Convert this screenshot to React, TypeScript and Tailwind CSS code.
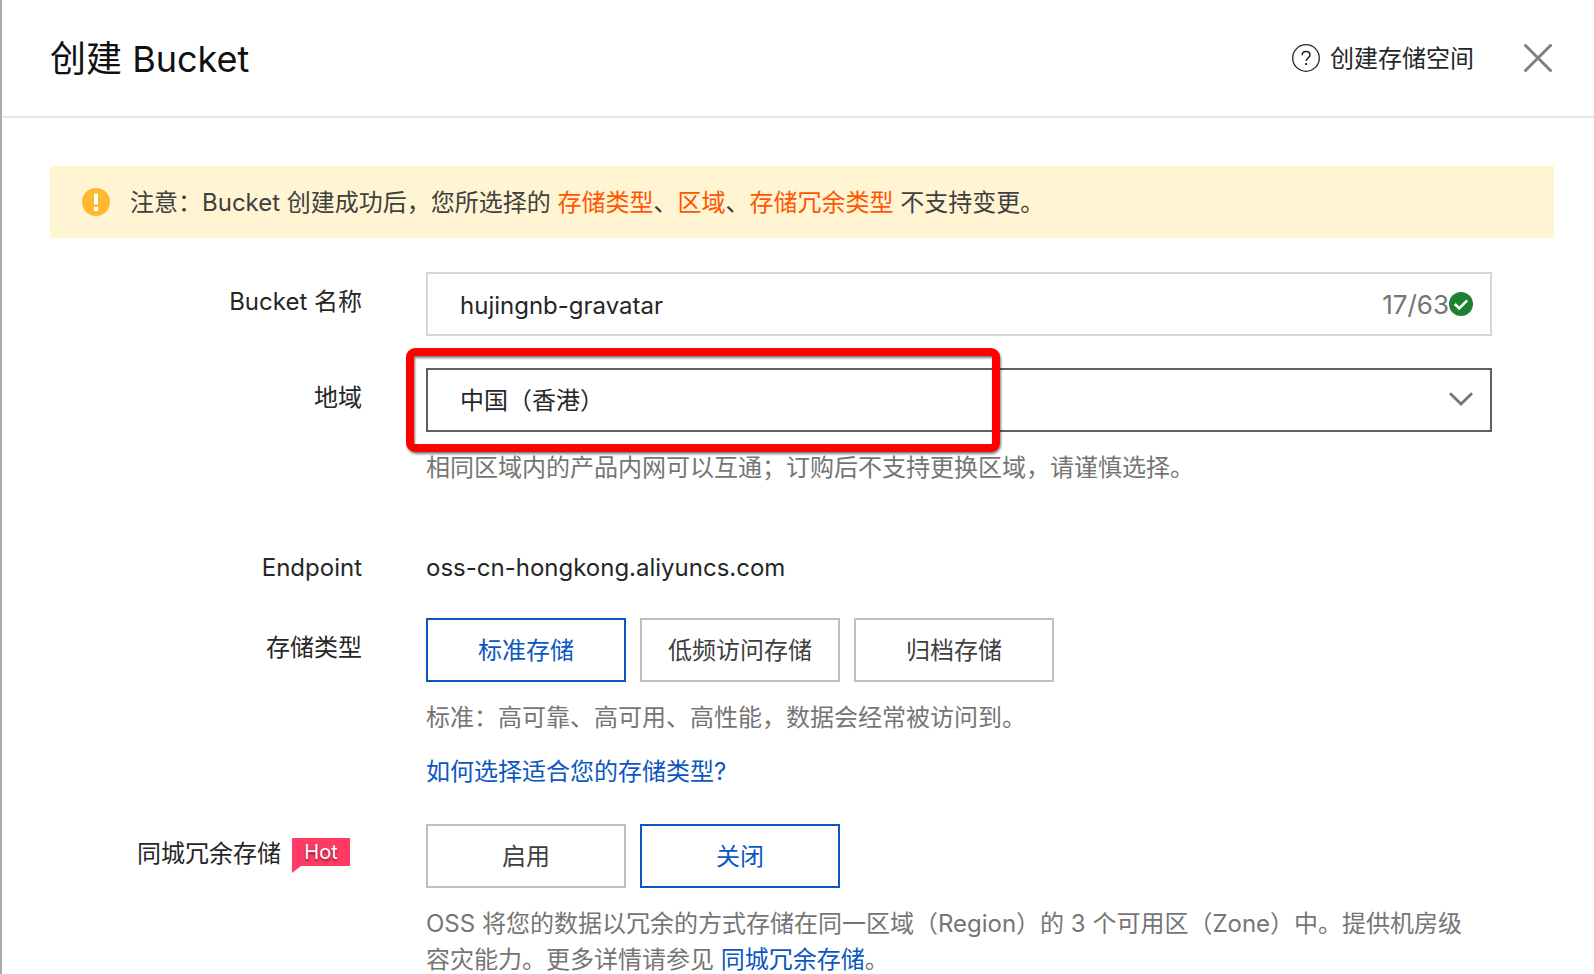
import { useState } from "react";
import type { ReactNode } from "react";

const STORAGE_TYPES = ["标准存储", "低频访问存储", "归档存储"];
const ZRS_OPTIONS = ["启用", "关闭"];

function OptionGroup({
  options,
  value,
  onChange,
}: {
  options: string[];
  value: string;
  onChange: (v: string) => void;
}) {
  return (
    <div className="flex gap-[14px]">
      {options.map((o) => (
        <button
          key={o}
          type="button"
          aria-pressed={o === value}
          onClick={() => onChange(o)}
          className={
            o === value
              ? "h-16 w-[200px] border-2 border-[#0b57c2] bg-white pt-0.5 text-[#0b57c2]"
              : "h-16 w-[200px] border-2 border-[#bfbfbf] bg-white pt-0.5 text-[#404040]"
          }
        >
          {o}
        </button>
      ))}
    </div>
  );
}

function Row({
  label,
  htmlFor,
  flat,
  children,
}: {
  label: ReactNode;
  htmlFor?: string;
  flat?: boolean;
  children: ReactNode;
}) {
  return (
    <div className="flex gap-16">
      <div className={flat ? "flex w-[312px] shrink-0 justify-end" : "flex w-[312px] shrink-0 justify-end pt-3"}>
        {htmlFor ? <label htmlFor={htmlFor}>{label}</label> : label}
      </div>
      <div className="relative min-w-0 flex-1">{children}</div>
    </div>
  );
}

function HotBadge() {
  return (
    <span className="relative mt-0.5 mr-3 ml-[11px] flex h-7 w-[58px] items-center justify-center bg-[#ff3b65] text-[20px] leading-7 text-white [text-shadow:0_2px_3px_rgba(0,0,0,0.5)]">
      Hot
      <svg className="absolute top-full left-0" width="10" height="7" viewBox="0 0 10 7" aria-hidden="true">
        <path d="M0 0h9L0 7z" fill="#ff3b65" />
      </svg>
    </span>
  );
}

export default function App() {
  const [name, setName] = useState("hujingnb-gravatar");
  const [region, setRegion] = useState("hongkong");
  const [storage, setStorage] = useState("标准存储");
  const [zrs, setZrs] = useState("关闭");

  return (
    <div className="h-screen overflow-hidden border-l-2 border-[#a9abae] bg-white font-['Inter','Noto_Sans_CJK_SC',sans-serif] text-[24px] leading-9 text-[#262626]">
      <header className="flex h-[118px] items-center justify-between border-b-2 border-[#e5e5e5] pr-[42px] pl-12">
        <h1 className="pt-0.5 text-[36px] leading-[48px] text-[#111]">创建 Bucket</h1>
        <div className="flex items-center gap-[50px]">
          <a href="#help" className="flex items-center gap-[10px]">
            <svg width="28" height="28" viewBox="0 0 28 28" fill="none" stroke="#262626" aria-hidden="true">
              <circle cx="14" cy="14" r="13.3" strokeWidth="1.3" />
              <path d="M10.2 11.2c0-2.3 1.6-3.7 3.9-3.7s3.9 1.4 3.9 3.4c0 2.9-3.8 3-3.8 6.2" strokeWidth="1.5" />
              <path d="M14.1 18.9v2" strokeWidth="1.8" />
            </svg>
            <span className="pt-0.5">创建存储空间</span>
          </a>
          <button type="button" aria-label="关闭窗口">
            <svg width="28" height="28" viewBox="0 0 28 28" stroke="#808080" strokeWidth="3" strokeLinecap="round" aria-hidden="true">
              <path d="M1.5 1.5l25 25M26.5 1.5l-25 25" />
            </svg>
          </button>
        </div>
      </header>

      <main className="pt-12 pr-10 pl-12">
        <div className="flex h-[72px] items-center gap-5 bg-[#fff5d3] px-8 text-[#404040]">
          <svg width="28" height="28" viewBox="0 0 28 28" aria-hidden="true">
            <circle cx="14" cy="14" r="14" fill="#ffb830" />
            <path d="M12 5.5h4v11h-4zM12 19h4v4h-4z" fill="#fff" />
          </svg>
          <p className="pt-0.5">
            注意：Bucket 创建成功后，您所选择的 <span className="text-[#ff5500]">存储类型</span>、
            <span className="text-[#ff5500]">区域</span>、<span className="text-[#ff5500]">存储冗余类型</span> 不支持变更。
          </p>
        </div>

        <form className="flex flex-col pt-[34px] pr-[62px]" onSubmit={(e) => e.preventDefault()}>
          <Row label="Bucket 名称" htmlFor="bucket-name">
            <div className="flex h-16 items-center border-2 border-[#d6d6d6] pr-[17px] pl-8">
              <input
                id="bucket-name"
                value={name}
                maxLength={63}
                onChange={(e) => setName(e.target.value)}
                className="h-full min-w-0 flex-1 pt-0.5 outline-none"
              />
              <span className="pt-0.5 text-[26px] text-[#757575]">{name.length}/63</span>
              <svg width="24" height="24" viewBox="0 0 24 24" fill="none" aria-hidden="true">
                <circle cx="12" cy="12" r="12" fill="#1e8130" />
                <path d="M5.8 12l4.4 4.3 8-8" stroke="#fff" strokeWidth="2.6" />
              </svg>
            </div>
          </Row>

          <div className="pt-8">
            <Row label="地域" htmlFor="region">
              <div className="relative">
                <select
                  id="region"
                  value={region}
                  onChange={(e) => setRegion(e.target.value)}
                  className="block h-16 w-full appearance-none border-2 border-[#5f5f61] bg-white pt-0.5 pr-16 pl-8 outline-none"
                >
                  <option value="hongkong">中国（香港）</option>
                </select>
                <svg
                  className="pointer-events-none absolute top-6 right-[18px]"
                  width="26"
                  height="14"
                  viewBox="0 0 26 14"
                  fill="none"
                  aria-hidden="true"
                >
                  <path d="M2 1.2l11 10.8 11-10.8" stroke="#757575" strokeWidth="2.8" />
                </svg>
                {/* highlight frame around the chosen region */}
                <div className="pointer-events-none absolute -inset-y-5 -left-5 w-[594px] rounded-[9px] border-8 border-[#ff0000] drop-shadow-[1px_2px_1px_rgba(0,0,0,0.5)]" />
              </div>
              <p className="pt-[18px] text-[#757575]">相同区域内的产品内网可以互通；订购后不支持更换区域，请谨慎选择。</p>
            </Row>
          </div>

          <div className="pt-16">
            <Row label="Endpoint" flat>
              oss-cn-hongkong.aliyuncs.com
            </Row>
          </div>

          <div className="pt-8">
            <Row label="存储类型">
              <OptionGroup options={STORAGE_TYPES} value={storage} onChange={setStorage} />
              <p className="pt-[18px] text-[#757575]">标准：高可靠、高可用、高性能，数据会经常被访问到。</p>
              <p className="pt-[18px]">
                <a href="#storage-class" className="text-[#0b57c2]">
                  如何选择适合您的存储类型?
                </a>
              </p>
            </Row>
          </div>

          <div className="pt-[34px]">
            <Row
              label={
                <>
                  <span>同城冗余存储</span>
                  <HotBadge />
                </>
              }
            >
              <OptionGroup options={ZRS_OPTIONS} value={zrs} onChange={setZrs} />
              <p className="pt-[18px] pr-3 text-[#757575]">
                OSS 将您的数据以冗余的方式存储在同一区域（Region）的 3 个可用区（Zone）中。提供机房级容灾能力。更多详情请参见{" "}
                <a href="#zrs" className="text-[#0b57c2]">
                  同城冗余存储
                </a>
                。
              </p>
            </Row>
          </div>
        </form>
      </main>
    </div>
  );
}
